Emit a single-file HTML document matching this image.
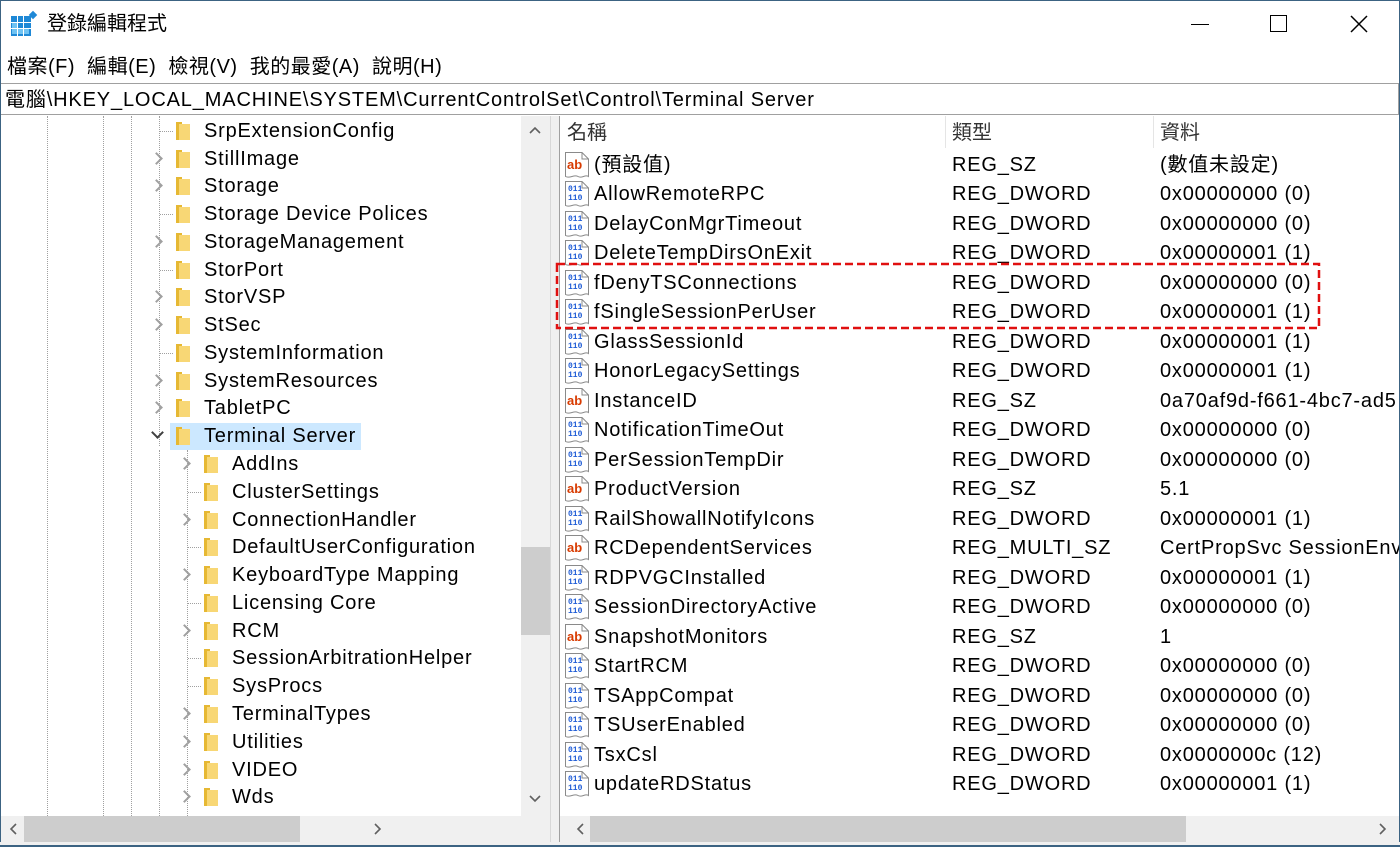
<!DOCTYPE html>
<html><head><meta charset="utf-8"><style>
*{margin:0;padding:0;box-sizing:border-box}
body{width:1400px;height:847px;overflow:hidden;background:#fff;font-family:"Liberation Sans","Noto Sans CJK TC",sans-serif;color:#000;position:relative}
.a{position:absolute;white-space:nowrap}
.win{position:absolute;left:0;top:0;width:1400px;height:847px;border:1px solid #3c6382}
.t{font-size:20px;line-height:28px;letter-spacing:0.8px}
.fold{position:absolute;width:14px;height:18px}
.fold::before{content:"";position:absolute;left:0;top:0;width:6px;height:18px;background:#e6b833}
.fold::after{content:"";position:absolute;left:3px;top:2px;width:11px;height:16px;background:#f8d775}
.arr{position:absolute;width:9px;height:9px;border-right:2px solid #a0a0a0;border-bottom:2px solid #a0a0a0;transform:rotate(-45deg)}
.vd{position:absolute;border-left:1px dotted #a0a0a0}
.hd{position:absolute;border-top:1px dotted #a0a0a0;width:13px}
.r{position:absolute;left:0;width:840px;height:29px;font-size:20px;line-height:30px;letter-spacing:0.8px}
.r span{position:absolute}
.ic{position:absolute;left:5px;top:2px}
</style></head><body>
<div class="win"></div>
<svg class="a" style="left:11px;top:10px" width="28" height="28" viewBox="0 0 28 28"><rect x="0" y="6" width="20" height="20" fill="#1e88d6"/><g fill="#6fc3f3"><rect x="1" y="13" width="5" height="5"/><rect x="7" y="19" width="5" height="5"/><rect x="13" y="19" width="5" height="5"/><rect x="1" y="19" width="5" height="5"/></g><g stroke="#fff" stroke-width="1"><line x1="0" y1="12.5" x2="20" y2="12.5"/><line x1="0" y1="18.5" x2="20" y2="18.5"/><line x1="6.5" y1="6" x2="6.5" y2="26"/><line x1="12.5" y1="6" x2="12.5" y2="26"/></g><rect x="19" y="2" width="6" height="6" fill="#1e88d6" transform="rotate(45 22 5)"/></svg>
<div class="a" style="left:47px;top:10px;font-size:20px;line-height:28px;color:#000">登錄編輯程式</div>
<div class="a" style="left:1191px;top:24px;width:18px;border-top:1.5px solid #000"></div>
<div class="a" style="left:1270px;top:15px;width:17px;height:17px;border:1.5px solid #000"></div>
<svg class="a" style="left:1350px;top:15px" width="18" height="18"><path d="M1 1L17 17M17 1L1 17" stroke="#000" stroke-width="1.5"/></svg>
<div class="a" style="left:7px;top:53px;font-size:20px;line-height:28px;letter-spacing:0.5px">檔案(F)&nbsp; 編輯(E)&nbsp; 檢視(V)&nbsp; 我的最愛(A)&nbsp; 說明(H)</div>
<div class="a" style="left:1px;top:83px;width:1398px;height:32px;border-top:1px solid #a0a0a0;border-bottom:1px solid #a0a0a0"></div>
<div class="a" style="left:1398px;top:84px;width:1px;height:30px;background:#a0a0a0"></div>
<div class="a" style="left:5px;top:86px;font-size:20px;line-height:28px;letter-spacing:0.85px">電腦\HKEY_LOCAL_MACHINE\SYSTEM\CurrentControlSet\Control\Terminal Server</div>
<div class="a" style="left:550px;top:116px;width:10px;height:730px;background:#f0f0f0;border-left:1px solid #d8d8d8;border-right:1px solid #a0a0a0"></div>
<div class="a" style="left:521px;top:116px;width:29px;height:700px;background:#f0f0f0"></div>
<div class="a" style="left:521px;top:547px;width:29px;height:88px;background:#cdcdcd"></div>
<svg class="a" style="left:529px;top:126px" width="12" height="8"><path d="M1 7L6 2L11 7" stroke="#606060" stroke-width="1.6" fill="none"/></svg>
<svg class="a" style="left:529px;top:795px" width="12" height="8"><path d="M1 1L6 6L11 1" stroke="#606060" stroke-width="1.6" fill="none"/></svg>
<div class="a" style="left:1px;top:816px;width:549px;height:26px;background:#f0f0f0"></div>
<div class="a" style="left:24px;top:816px;width:276px;height:26px;background:#cdcdcd"></div>
<svg class="a" style="left:9px;top:823px" width="8" height="12"><path d="M7 1L2 6L7 11" stroke="#606060" stroke-width="1.6" fill="none"/></svg>
<svg class="a" style="left:374px;top:823px" width="8" height="12"><path d="M1 1L6 6L1 11" stroke="#606060" stroke-width="1.6" fill="none"/></svg>
<div class="a" style="left:560px;top:816px;width:839px;height:26px;background:#f0f0f0"></div>
<div class="a" style="left:590px;top:816px;width:596px;height:26px;background:#cdcdcd"></div>
<svg class="a" style="left:576px;top:823px" width="8" height="12"><path d="M7 1L2 6L7 11" stroke="#606060" stroke-width="1.6" fill="none"/></svg>
<svg class="a" style="left:1379px;top:823px" width="8" height="12"><path d="M1 1L6 6L1 11" stroke="#606060" stroke-width="1.6" fill="none"/></svg>
<div class="a" style="left:0;top:842px;width:1400px;height:5px;background:#f0f0f0"></div>
<div class="a" style="left:0;top:845px;width:1400px;height:2px;background:#3c6382"></div>

<div class="vd" style="left:47px;top:116px;height:700px"></div>
<div class="vd" style="left:103px;top:116px;height:700px"></div>
<div class="vd" style="left:131px;top:116px;height:700px"></div>
<div class="vd" style="left:159px;top:116px;height:330px"></div>
<div class="vd" style="left:187px;top:450px;height:366px"></div>
<div class="vd" style="left:159px;top:450px;height:366px"></div>
<div class="a" style="left:170px;top:423px;width:191px;height:27px;background:#cce8ff"></div>

<div class="a t" style="left:0;top:117px;width:520px"><div class="hd" style="left:160px;top:14px"></div><div class="fold" style="left:176px;top:5px"></div><span class="a" style="left:204px">SrpExtensionConfig</span></div>
<div class="a t" style="left:0;top:145px;width:520px"><div class="arr" style="left:152px;top:9px"></div><div class="fold" style="left:176px;top:5px"></div><span class="a" style="left:204px">StillImage</span></div>
<div class="a t" style="left:0;top:172px;width:520px"><div class="arr" style="left:152px;top:9px"></div><div class="fold" style="left:176px;top:5px"></div><span class="a" style="left:204px">Storage</span></div>
<div class="a t" style="left:0;top:200px;width:520px"><div class="hd" style="left:160px;top:14px"></div><div class="fold" style="left:176px;top:5px"></div><span class="a" style="left:204px">Storage Device Polices</span></div>
<div class="a t" style="left:0;top:228px;width:520px"><div class="arr" style="left:152px;top:9px"></div><div class="fold" style="left:176px;top:5px"></div><span class="a" style="left:204px">StorageManagement</span></div>
<div class="a t" style="left:0;top:256px;width:520px"><div class="hd" style="left:160px;top:14px"></div><div class="fold" style="left:176px;top:5px"></div><span class="a" style="left:204px">StorPort</span></div>
<div class="a t" style="left:0;top:283px;width:520px"><div class="arr" style="left:152px;top:9px"></div><div class="fold" style="left:176px;top:5px"></div><span class="a" style="left:204px">StorVSP</span></div>
<div class="a t" style="left:0;top:311px;width:520px"><div class="arr" style="left:152px;top:9px"></div><div class="fold" style="left:176px;top:5px"></div><span class="a" style="left:204px">StSec</span></div>
<div class="a t" style="left:0;top:339px;width:520px"><div class="hd" style="left:160px;top:14px"></div><div class="fold" style="left:176px;top:5px"></div><span class="a" style="left:204px">SystemInformation</span></div>
<div class="a t" style="left:0;top:367px;width:520px"><div class="arr" style="left:152px;top:9px"></div><div class="fold" style="left:176px;top:5px"></div><span class="a" style="left:204px">SystemResources</span></div>
<div class="a t" style="left:0;top:394px;width:520px"><div class="arr" style="left:152px;top:9px"></div><div class="fold" style="left:176px;top:5px"></div><span class="a" style="left:204px">TabletPC</span></div>
<div class="a t" style="left:0;top:422px;width:520px"><div class="arr" style="left:153px;top:6px;transform:rotate(45deg);border-color:#404040"></div><div class="fold" style="left:176px;top:5px"></div><span class="a" style="left:204px">Terminal Server</span></div>
<div class="a t" style="left:0;top:450px;width:520px"><div class="arr" style="left:180px;top:9px"></div><div class="fold" style="left:204px;top:5px"></div><span class="a" style="left:232px">AddIns</span></div>
<div class="a t" style="left:0;top:478px;width:520px"><div class="hd" style="left:188px;top:14px"></div><div class="fold" style="left:204px;top:5px"></div><span class="a" style="left:232px">ClusterSettings</span></div>
<div class="a t" style="left:0;top:506px;width:520px"><div class="arr" style="left:180px;top:9px"></div><div class="fold" style="left:204px;top:5px"></div><span class="a" style="left:232px">ConnectionHandler</span></div>
<div class="a t" style="left:0;top:533px;width:520px"><div class="hd" style="left:188px;top:14px"></div><div class="fold" style="left:204px;top:5px"></div><span class="a" style="left:232px">DefaultUserConfiguration</span></div>
<div class="a t" style="left:0;top:561px;width:520px"><div class="arr" style="left:180px;top:9px"></div><div class="fold" style="left:204px;top:5px"></div><span class="a" style="left:232px">KeyboardType Mapping</span></div>
<div class="a t" style="left:0;top:589px;width:520px"><div class="hd" style="left:188px;top:14px"></div><div class="fold" style="left:204px;top:5px"></div><span class="a" style="left:232px">Licensing Core</span></div>
<div class="a t" style="left:0;top:617px;width:520px"><div class="arr" style="left:180px;top:9px"></div><div class="fold" style="left:204px;top:5px"></div><span class="a" style="left:232px">RCM</span></div>
<div class="a t" style="left:0;top:644px;width:520px"><div class="hd" style="left:188px;top:14px"></div><div class="fold" style="left:204px;top:5px"></div><span class="a" style="left:232px">SessionArbitrationHelper</span></div>
<div class="a t" style="left:0;top:672px;width:520px"><div class="hd" style="left:188px;top:14px"></div><div class="fold" style="left:204px;top:5px"></div><span class="a" style="left:232px">SysProcs</span></div>
<div class="a t" style="left:0;top:700px;width:520px"><div class="arr" style="left:180px;top:9px"></div><div class="fold" style="left:204px;top:5px"></div><span class="a" style="left:232px">TerminalTypes</span></div>
<div class="a t" style="left:0;top:728px;width:520px"><div class="arr" style="left:180px;top:9px"></div><div class="fold" style="left:204px;top:5px"></div><span class="a" style="left:232px">Utilities</span></div>
<div class="a t" style="left:0;top:756px;width:520px"><div class="arr" style="left:180px;top:9px"></div><div class="fold" style="left:204px;top:5px"></div><span class="a" style="left:232px">VIDEO</span></div>
<div class="a t" style="left:0;top:783px;width:520px"><div class="arr" style="left:180px;top:9px"></div><div class="fold" style="left:204px;top:5px"></div><span class="a" style="left:232px">Wds</span></div>

<div class="a" style="left:560px;top:116px;width:839px;height:700px;overflow:hidden">
<div class="a" style="left:385px;top:0;width:1px;height:32px;background:#e5e5e5"></div>
<div class="a" style="left:593px;top:0;width:1px;height:32px;background:#e5e5e5"></div>
<div class="a" style="left:7px;top:3px;font-size:20px;line-height:28px;color:#333">名稱</div>
<div class="a" style="left:392px;top:3px;font-size:20px;line-height:28px;color:#333">類型</div>
<div class="a" style="left:600px;top:3px;font-size:20px;line-height:28px;color:#333">資料</div>
<svg width="0" height="0" style="position:absolute"><defs>
<g id="pg"><path d="M0.5 0.5H17L23.5 7V24.5C20 22 17 27 13 24.5C9 22 5 27 0.5 24.5Z" fill="#fff" stroke="#8a8a8a"/><path d="M17 0.5V7H23.5" fill="none" stroke="#8a8a8a"/></g>
<g id="ab"><use href="#pg"/><text x="2" y="17" font-size="13" fill="#d83b01" font-family="Liberation Sans" font-weight="bold" letter-spacing="0">ab</text></g>
<g id="bn"><use href="#pg"/><text x="3" y="10" font-size="8" fill="#1f5cd6" font-family="Liberation Mono" font-weight="bold" letter-spacing="0">011</text><text x="3" y="19" font-size="8" fill="#1f5cd6" font-family="Liberation Mono" font-weight="bold" letter-spacing="0">110</text></g>
</defs></svg>
<div class="r" style="top:34px"><svg class="ic" width="25" height="27"><use href="#ab"/></svg><span style="left:34px">(預設值)</span><span style="left:392px">REG_SZ</span><span style="left:600px">(數值未設定)</span></div>
<div class="r" style="top:63px"><svg class="ic" width="25" height="27"><use href="#bn"/></svg><span style="left:34px">AllowRemoteRPC</span><span style="left:392px">REG_DWORD</span><span style="left:600px">0x00000000 (0)</span></div>
<div class="r" style="top:93px"><svg class="ic" width="25" height="27"><use href="#bn"/></svg><span style="left:34px">DelayConMgrTimeout</span><span style="left:392px">REG_DWORD</span><span style="left:600px">0x00000000 (0)</span></div>
<div class="r" style="top:122px"><svg class="ic" width="25" height="27"><use href="#bn"/></svg><span style="left:34px">DeleteTempDirsOnExit</span><span style="left:392px">REG_DWORD</span><span style="left:600px">0x00000001 (1)</span></div>
<div class="r" style="top:152px"><svg class="ic" width="25" height="27"><use href="#bn"/></svg><span style="left:34px">fDenyTSConnections</span><span style="left:392px">REG_DWORD</span><span style="left:600px">0x00000000 (0)</span></div>
<div class="r" style="top:181px"><svg class="ic" width="25" height="27"><use href="#bn"/></svg><span style="left:34px">fSingleSessionPerUser</span><span style="left:392px">REG_DWORD</span><span style="left:600px">0x00000001 (1)</span></div>
<div class="r" style="top:211px"><svg class="ic" width="25" height="27"><use href="#bn"/></svg><span style="left:34px">GlassSessionId</span><span style="left:392px">REG_DWORD</span><span style="left:600px">0x00000001 (1)</span></div>
<div class="r" style="top:240px"><svg class="ic" width="25" height="27"><use href="#bn"/></svg><span style="left:34px">HonorLegacySettings</span><span style="left:392px">REG_DWORD</span><span style="left:600px">0x00000001 (1)</span></div>
<div class="r" style="top:270px"><svg class="ic" width="25" height="27"><use href="#ab"/></svg><span style="left:34px">InstanceID</span><span style="left:392px">REG_SZ</span><span style="left:600px">0a70af9d-f661-4bc7-ad5</span></div>
<div class="r" style="top:299px"><svg class="ic" width="25" height="27"><use href="#bn"/></svg><span style="left:34px">NotificationTimeOut</span><span style="left:392px">REG_DWORD</span><span style="left:600px">0x00000000 (0)</span></div>
<div class="r" style="top:329px"><svg class="ic" width="25" height="27"><use href="#bn"/></svg><span style="left:34px">PerSessionTempDir</span><span style="left:392px">REG_DWORD</span><span style="left:600px">0x00000000 (0)</span></div>
<div class="r" style="top:358px"><svg class="ic" width="25" height="27"><use href="#ab"/></svg><span style="left:34px">ProductVersion</span><span style="left:392px">REG_SZ</span><span style="left:600px">5.1</span></div>
<div class="r" style="top:388px"><svg class="ic" width="25" height="27"><use href="#bn"/></svg><span style="left:34px">RailShowallNotifyIcons</span><span style="left:392px">REG_DWORD</span><span style="left:600px">0x00000001 (1)</span></div>
<div class="r" style="top:417px"><svg class="ic" width="25" height="27"><use href="#ab"/></svg><span style="left:34px">RCDependentServices</span><span style="left:392px">REG_MULTI_SZ</span><span style="left:600px">CertPropSvc SessionEnv</span></div>
<div class="r" style="top:447px"><svg class="ic" width="25" height="27"><use href="#bn"/></svg><span style="left:34px">RDPVGCInstalled</span><span style="left:392px">REG_DWORD</span><span style="left:600px">0x00000001 (1)</span></div>
<div class="r" style="top:476px"><svg class="ic" width="25" height="27"><use href="#bn"/></svg><span style="left:34px">SessionDirectoryActive</span><span style="left:392px">REG_DWORD</span><span style="left:600px">0x00000000 (0)</span></div>
<div class="r" style="top:506px"><svg class="ic" width="25" height="27"><use href="#ab"/></svg><span style="left:34px">SnapshotMonitors</span><span style="left:392px">REG_SZ</span><span style="left:600px">1</span></div>
<div class="r" style="top:535px"><svg class="ic" width="25" height="27"><use href="#bn"/></svg><span style="left:34px">StartRCM</span><span style="left:392px">REG_DWORD</span><span style="left:600px">0x00000000 (0)</span></div>
<div class="r" style="top:565px"><svg class="ic" width="25" height="27"><use href="#bn"/></svg><span style="left:34px">TSAppCompat</span><span style="left:392px">REG_DWORD</span><span style="left:600px">0x00000000 (0)</span></div>
<div class="r" style="top:594px"><svg class="ic" width="25" height="27"><use href="#bn"/></svg><span style="left:34px">TSUserEnabled</span><span style="left:392px">REG_DWORD</span><span style="left:600px">0x00000000 (0)</span></div>
<div class="r" style="top:624px"><svg class="ic" width="25" height="27"><use href="#bn"/></svg><span style="left:34px">TsxCsl</span><span style="left:392px">REG_DWORD</span><span style="left:600px">0x0000000c (12)</span></div>
<div class="r" style="top:653px"><svg class="ic" width="25" height="27"><use href="#bn"/></svg><span style="left:34px">updateRDStatus</span><span style="left:392px">REG_DWORD</span><span style="left:600px">0x00000001 (1)</span></div>
</div>
<svg class="a" style="left:555px;top:262px" width="766" height="68"><rect x="2" y="2" width="762" height="64" fill="none" stroke="#e01010" stroke-width="2.5" stroke-dasharray="8,4"/></svg>
</body></html>
